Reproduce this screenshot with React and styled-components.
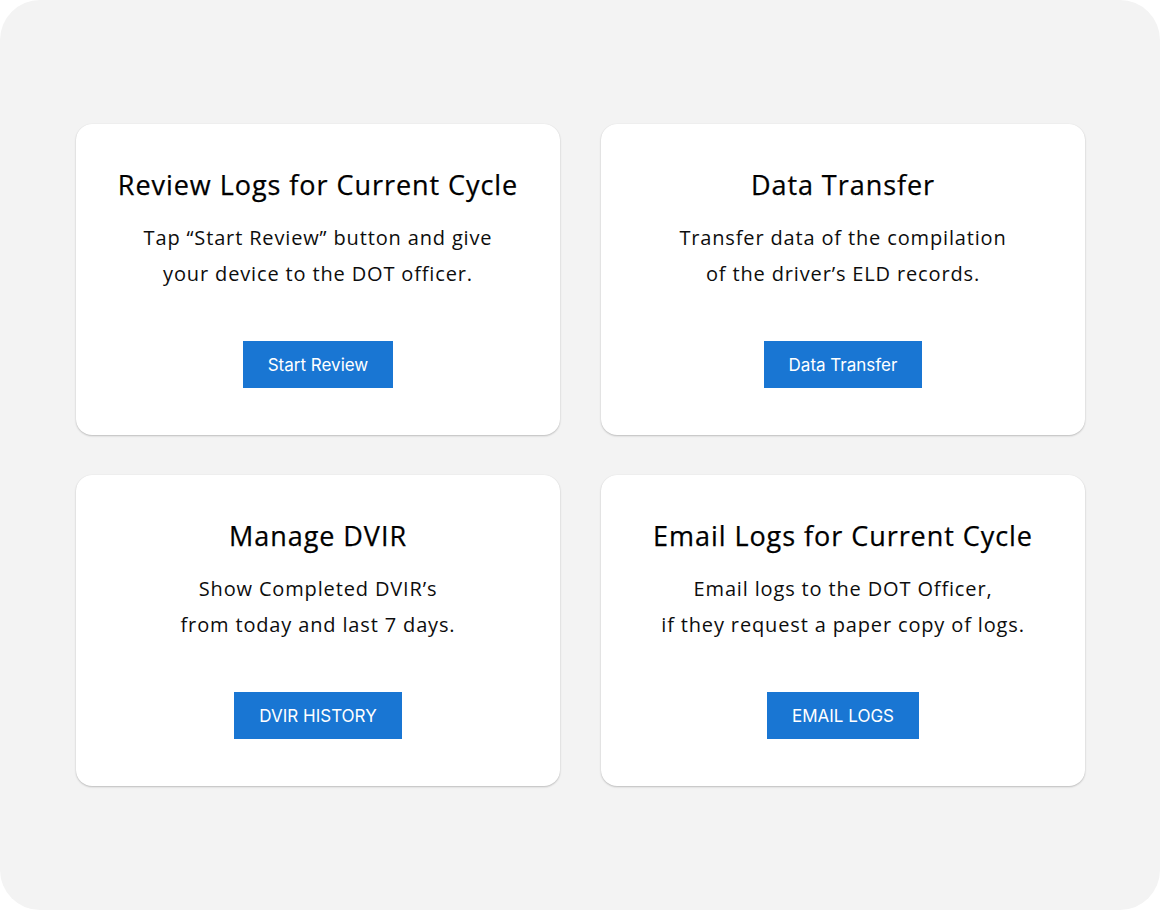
import React from "react";
import styled, { createGlobalStyle } from "styled-components";

const Global = createGlobalStyle`
  html, body { margin: 0; padding: 0; background: #ffffff; }
  * { box-sizing: border-box; }
`;

const Frame = styled.div`
  width: 1160px;
  height: 910px;
  background: #f3f3f3;
  border-radius: 40px;
  padding: 124px 75px 124px 76px;
  display: grid;
  grid-template-columns: 484px 484px;
  grid-template-rows: 311px 311px;
  column-gap: 41px;
  row-gap: 40px;
`;

const Card = styled.section`
  background: #ffffff;
  border-radius: 16px;
  box-shadow: 0 1px 2px rgba(0, 0, 0, 0.22), 0 0 1px rgba(0, 0, 0, 0.08);
  display: flex;
  flex-direction: column;
  align-items: center;
  padding-top: 43px;
  text-align: center;
`;

const Title = styled.h2`
  margin: 0;
  font-family: "Open Sans", sans-serif;
  font-weight: 500;
  font-size: 27px;
  line-height: 36px;
  letter-spacing: 0.95px;
  color: #000000;
  white-space: nowrap;
  -webkit-text-stroke: 0.25px #000000;
`;

const Body = styled.p`
  margin: 17px 0 0;
  font-family: "Open Sans", sans-serif;
  font-weight: 400;
  font-size: 20px;
  line-height: 36px;
  letter-spacing: 0.85px;
  color: #0d0d0d;
  white-space: nowrap;
`;

const Button = styled.button`
  margin-top: 49px;
  height: 47px;
  padding: 0 25px;
  border: none;
  background: #1976d3;
  color: #ffffff;
  font-family: "Inter", sans-serif;
  font-size: 17px;
  font-weight: 400;
  cursor: pointer;
`;

const cards = [
  {
    title: "Review Logs for Current Cycle",
    lines: ["Tap \u201cStart Review\u201d button and give", "your device to the DOT officer."],
    button: "Start Review",
  },
  {
    title: "Data Transfer",
    lines: ["Transfer data of the compilation", "of the driver\u2019s ELD records."],
    button: "Data Transfer",
  },
  {
    title: "Manage DVIR",
    lines: ["Show Completed DVIR\u2019s", "from today and last 7 days."],
    button: "DVIR HISTORY",
  },
  {
    title: "Email Logs for Current Cycle",
    lines: ["Email logs to the DOT Officer,", "if they request a paper copy of logs."],
    button: "EMAIL LOGS",
  },
];

export default function App() {
  return (
    <>
      <Global />
      <Frame>
        {cards.map((c) => (
          <Card key={c.title}>
            <Title>{c.title}</Title>
            <Body>
              {c.lines[0]}
              <br />
              {c.lines[1]}
            </Body>
            <Button>{c.button}</Button>
          </Card>
        ))}
      </Frame>
    </>
  );
}
